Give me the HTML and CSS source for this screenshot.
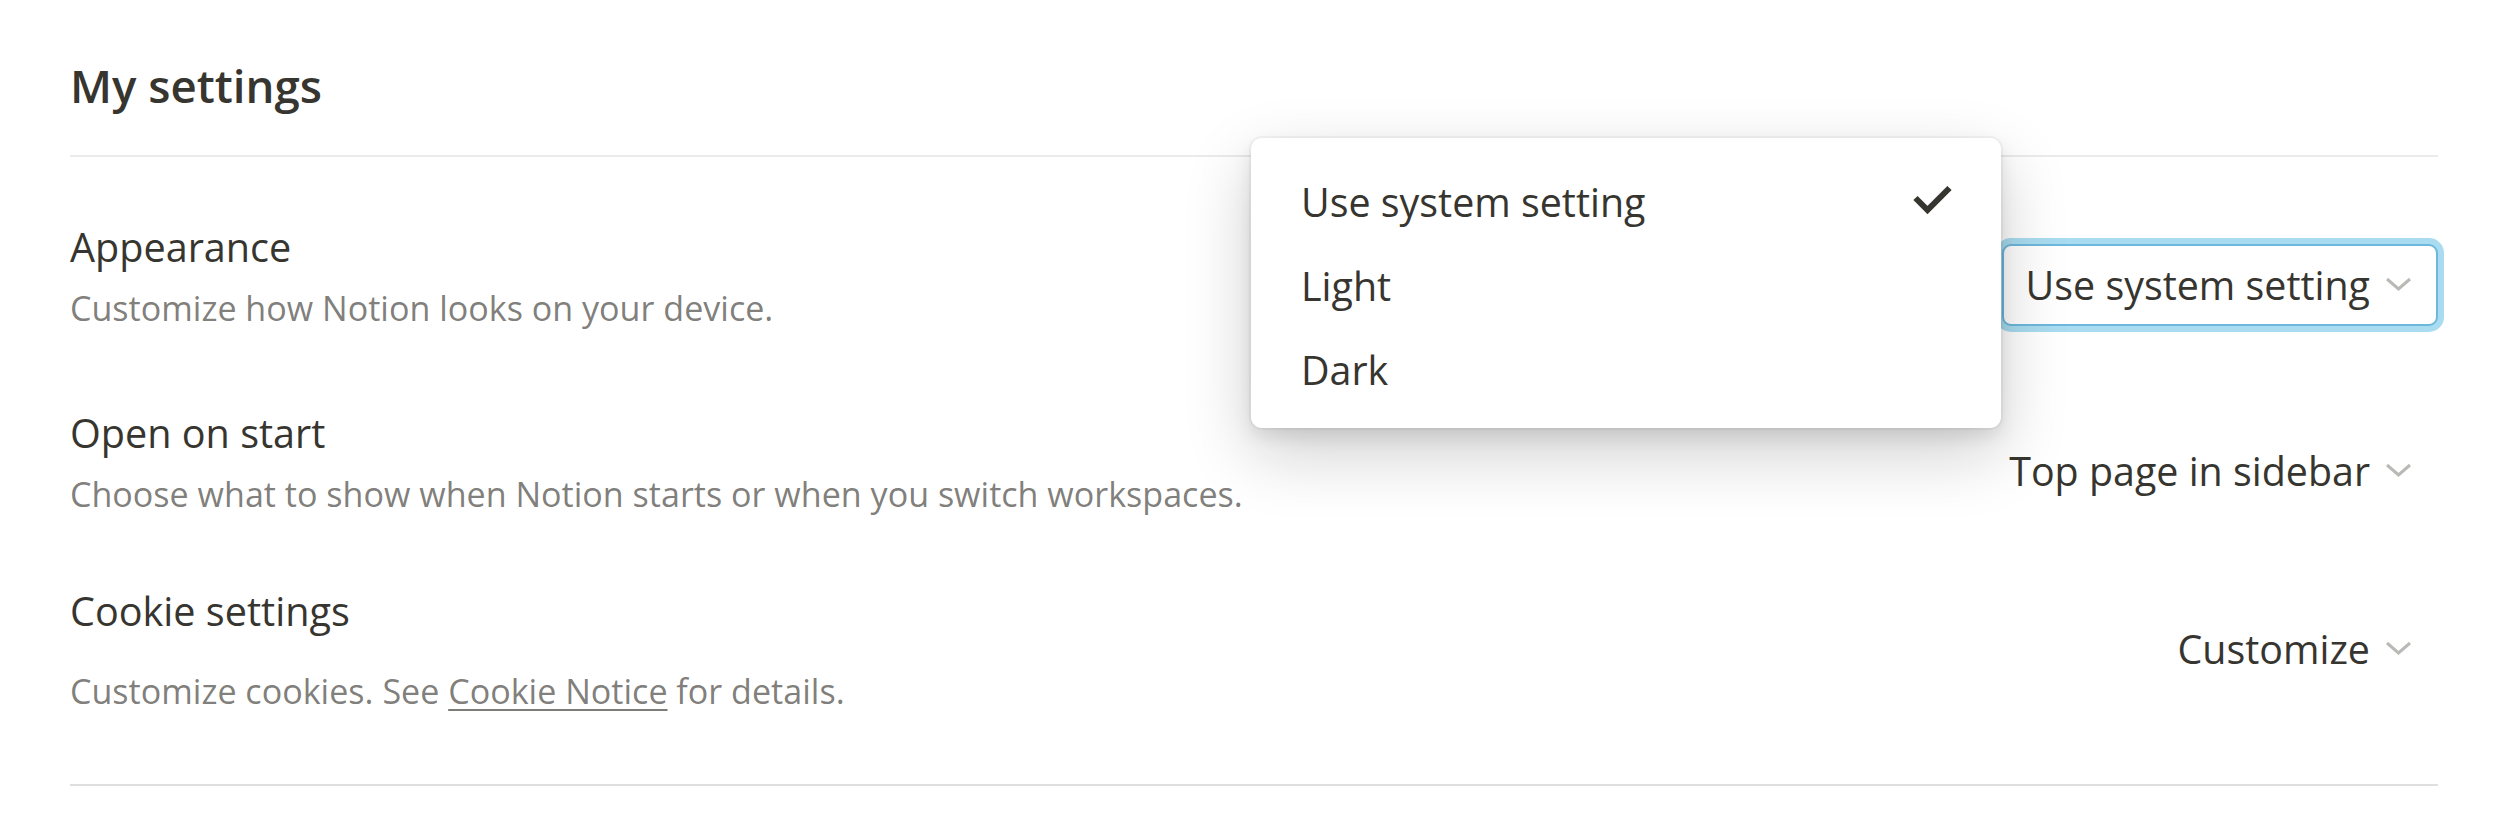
FILE: index.html
```html
<!DOCTYPE html>
<html lang="en">
<head>
<meta charset="utf-8">
<title>My settings</title>
<link rel="stylesheet" href="styles.css">
</head>
<body>
<div class="page">
  <header class="header">
    <h1 class="heading">My settings</h1>
  </header>
  <section class="rows">
    <div class="row">
      <div class="info">
        <div class="title">Appearance</div>
        <div class="desc">Customize how Notion looks on your device.</div>
      </div>
      <div class="select select-open" role="button">
        <span>Use system setting</span>
        <svg class="chev" viewBox="0 0 27 14" width="27" height="14"><polyline points="2,2 13.5,12 25,2"/></svg>
      </div>
    </div>
    <div class="row row-open">
      <div class="info">
        <div class="title">Open on start</div>
        <div class="desc">Choose what to show when Notion starts or when you switch workspaces.</div>
      </div>
      <div class="select" role="button">
        <span>Top page in sidebar</span>
        <svg class="chev" viewBox="0 0 27 14" width="27" height="14"><polyline points="2,2 13.5,12 25,2"/></svg>
      </div>
    </div>
    <div class="row row-cookie">
      <div class="info">
        <div class="title">Cookie settings</div>
        <div class="desc desc-spaced">Customize cookies. See <a class="link" href="#">Cookie Notice</a> for details.</div>
      </div>
      <div class="select" role="button">
        <span>Customize</span>
        <svg class="chev" viewBox="0 0 27 14" width="27" height="14"><polyline points="2,2 13.5,12 25,2"/></svg>
      </div>
    </div>
  </section>

  <div class="menu" role="menu">
    <div class="menu-item" role="menuitem">
      <span>Use system setting</span>
      <svg class="check" viewBox="0 0 41 29" width="41" height="29"><polyline points="3.5,13 15.5,25 37.5,3"/></svg>
    </div>
    <div class="menu-item" role="menuitem"><span>Light</span></div>
    <div class="menu-item" role="menuitem"><span>Dark</span></div>
  </div>
</div>
</body>
</html>
```

FILE: styles.css
```css
* {
  box-sizing: border-box;
}

html, body {
  margin: 0;
  background: #ffffff;
}

body {
  font-family: "Open Sans", "Noto Sans", "Liberation Sans", sans-serif;
  color: #37352f;
}

.page {
  position: relative;
  padding: 0 68px 0 70px;
}

.header {
  padding-top: 55px;
  padding-bottom: 40px;
  border-bottom: 2px solid #ebebea;
}

.heading {
  margin: 0;
  font-size: 45.6px;
  font-weight: 600;
  line-height: 60px;
  color: #37352f;
}

.rows {
  padding-top: 63px;
  padding-bottom: 70px;
  border-bottom: 2px solid #dfdfde;
}

.row {
  display: flex;
  justify-content: space-between;
  align-items: flex-start;
}

.row-open {
  margin-top: 75px;
}

.row-cookie {
  margin-top: 67px;
}

.title {
  font-size: 39.6px;
  line-height: 54px;
  color: #37352f;
}

.desc {
  margin-top: 12px;
  font-size: 34.1px;
  line-height: 45px;
  color: rgba(55, 53, 47, 0.65);
}

.desc-spaced {
  margin-top: 31px;
}

.link {
  color: rgba(55, 53, 47, 0.65);
  text-decoration: underline;
  text-decoration-thickness: 2px;
  text-underline-offset: 5px;
}

.select {
  margin-top: 24px;
  height: 82px;
  display: flex;
  align-items: center;
  gap: 15px;
  padding: 0 24px 0 22px;
  border: 2px solid transparent;
  border-radius: 9px;
  font-size: 39.4px;
  line-height: 54px;
  color: #37352f;
  white-space: nowrap;
  background: #ffffff;
}

.select-open {
  border-color: #6db8dd;
  box-shadow: 0 0 0 6px #a9dcf0;
}

.chev {
  display: block;
  margin-top: -3px;
}

.chev polyline {
  fill: none;
  stroke: #bab9b6;
  stroke-width: 3;
}

.menu {
  position: absolute;
  top: 138px;
  left: 1251px;
  width: 750px;
  padding: 22px 0 16px;
  background: #ffffff;
  border-radius: 11px;
  box-shadow: 0 0 0 2px rgba(15, 15, 15, 0.04),
              0 8px 17px rgba(15, 15, 15, 0.1),
              0 25px 67px rgba(15, 15, 15, 0.2);
}

.menu-item {
  height: 84px;
  display: flex;
  align-items: center;
  justify-content: space-between;
  padding: 0 48px 0 50px;
  font-size: 39.4px;
  line-height: 54px;
  color: #37352f;
}

.check {
  display: block;
  margin-top: -5px;
}

.check polyline {
  fill: none;
  stroke: #37352f;
  stroke-width: 6;
}
```
